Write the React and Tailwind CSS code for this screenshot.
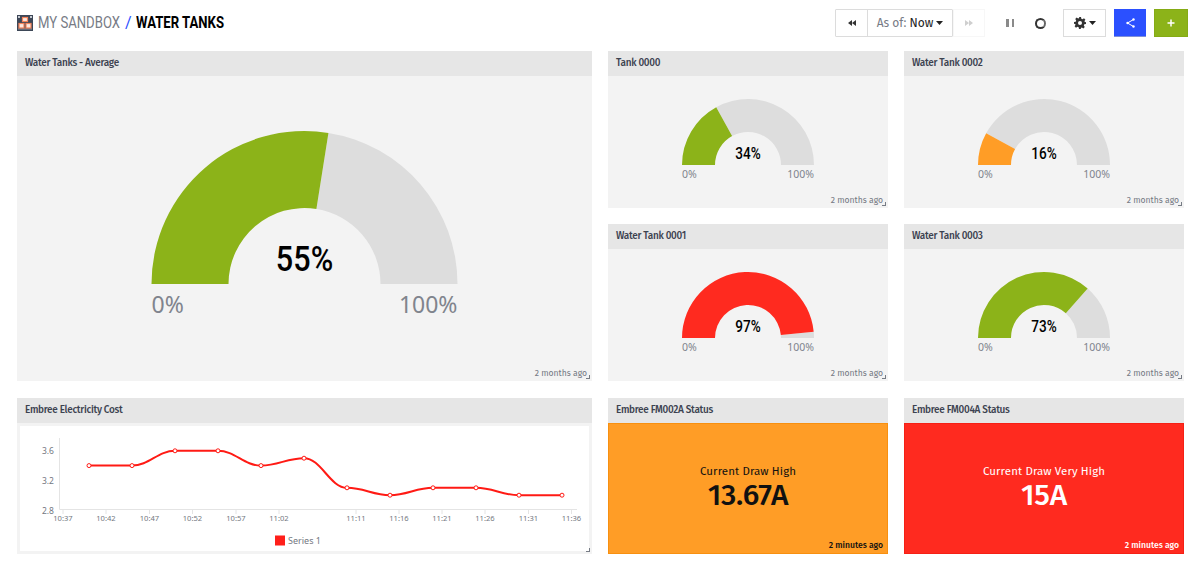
import React from "react";

const FONT = "font-['Fira_Sans','Noto_Sans','Roboto',sans-serif]";
const GREEN = "#8cb319";
const RED = "#ff2a1f";
const ORANGE = "#ff9d26";

function arc(cx, cy, R, r, a0, a1) {
  const p = (rad, a) => [cx - rad * Math.cos(a), cy - rad * Math.sin(a)];
  const [x0, y0] = p(R, a0);
  const [x1, y1] = p(R, a1);
  const [x2, y2] = p(r, a1);
  const [x3, y3] = p(r, a0);
  return `M${x0} ${y0}A${R} ${R} 0 0 1 ${x1} ${y1}L${x2} ${y2}A${r} ${r} 0 0 0 ${x3} ${y3}Z`;
}

function Gauge({ w, h, cx, cy, R, r, value, color, big }) {
  const a = (value / 100) * Math.PI;
  const vy = big ? cy - 13 : cy - 6;
  return (
    <svg width={w} height={h} viewBox={`0 0 ${w} ${h}`} className="block">
      <path d={arc(cx, cy, R, r, a, Math.PI)} fill="#dddddd" />
      <path d={arc(cx, cy, R, r, 0, a)} fill={color} />
      <text transform={`translate(${cx} ${vy}) scale(0.85 1)`} textAnchor="middle" fontFamily="Roboto, sans-serif" fontWeight="500" fontSize={big ? 36 : 16} fill="#000">{value}%</text>
      <text x={cx - R} y={big ? cy + 29 : cy + 13} fontFamily="'Noto Sans', sans-serif" fontSize={big ? 23 : 10.5} fill="#80848d">0%</text>
      <text x={cx + R} y={big ? cy + 29 : cy + 13} textAnchor="end" fontFamily="'Noto Sans', sans-serif" fontSize={big ? 23 : 10.5} fill="#80848d">100%</text>
    </svg>
  );
}

function Handle({ dark }) {
  return <span className={`absolute right-[2px] bottom-[2px] w-[4px] h-[4px] border-r border-b ${dark ? "border-[#a86a1c]" : "border-[#777c85]"}`} />;
}

function PanelHead({ title }) {
  return <div className="h-[25px] shrink-0 bg-[#e6e6e6] pl-[8px] flex items-center text-[10px] font-medium text-[#3c4250] tracking-[-0.3px]">{title}</div>;
}

function Panel({ title, time, body = "bg-[#f3f3f3]", children, dark }) {
  return (
    <div className="flex flex-col min-w-0 h-full">
      <PanelHead title={title} />
      <div className={`relative flex-1 min-h-0 ${body}`}>
        {children}
        {time && <span className="absolute right-[5px] bottom-[2px] text-[8.6px] leading-[12px] text-[#747983]">{time}</span>}
        <Handle dark={dark} />
      </div>
    </div>
  );
}

function SmallGauge({ title, value, color }) {
  return (
    <Panel title={title} time="2 months ago">
      <div className="pt-[22px] flex justify-center">
        <Gauge w={280} h={110} cx={140} cy={67} R={66} r={33} value={value} color={color} />
      </div>
    </Panel>
  );
}

const pts = [[89,3.4],[132,3.4],[175,3.6],[218,3.6],[261,3.4],[304,3.5],[347,3.1],[390,3.0],[433,3.1],[476,3.1],[519,3.0],[562,3.0]];
const yOf = (v) => 510 - (v - 2.8) * 74;
const ticks = [[63,"10:37"],[106,"10:42"],[149.5,"10:47"],[192.5,"10:52"],[236,"10:57"],[279,"11:02"],[356,"11:11"],[399,"11:16"],[442,"11:21"],[485,"11:26"],[528.5,"11:31"],[571.5,"11:36"]];

function linePath() {
  const P = pts.map(([x, v]) => [x, yOf(v)]);
  let d = `M${P[0][0]} ${P[0][1]}`;
  for (let i = 1; i < P.length; i++) {
    const [x0, y0] = P[i - 1];
    const [x1, y1] = P[i];
    const dx = (x1 - x0) * 0.4;
    d += `C${x0 + dx} ${y0} ${x1 - dx} ${y1} ${x1} ${y1}`;
  }
  return d;
}

function Chart() {
  const ox = 20, oy = 426;
  return (
    <div className="h-full p-[3px]">
      <div className="bg-white h-full">
        <svg width="568" height="125" viewBox={`${ox} ${oy} 568 125`} className="block" fontFamily="'Noto Sans', sans-serif">
          <path d="M59.5 438V509.5H577" stroke="#e4e4e4" strokeWidth="1" fill="none" />
          {ticks.map(([x, t]) => (
            <g key={t}>
              <line x1={x} x2={x} y1={509.5} y2={514} stroke="#e4e4e4" />
              <text x={x} y={521} textAnchor="middle" fontSize="7.6" fill="#74787f">{t}</text>
            </g>
          ))}
          {[["3.6", 454], ["3.2", 484], ["2.8", 513.5]].map(([t, y]) => (
            <text key={t} x={54} y={y} textAnchor="end" fontSize="8.5" fill="#74787f">{t}</text>
          ))}
          <path d={linePath()} stroke="#ff1a14" strokeWidth="2" fill="none" />
          {pts.map(([x, v]) => (
            <circle key={x} cx={x} cy={yOf(v)} r="2" fill="#fff" stroke="#ff1a14" strokeWidth="1" />
          ))}
          <rect x="275" y="535.5" width="10" height="10" fill="#ff1f1a" />
          <text x="288" y="544" fontSize="9" fill="#74787f">Series 1</text>
        </svg>
      </div>
    </div>
  );
}

function Status({ title, label, value, bg, border, textClass }) {
  return (
    <div className="flex flex-col h-full">
      <PanelHead title={title} />
      <div className={`relative flex-1 flex flex-col items-center justify-center border ${bg} ${border} ${textClass}`}>
        <div className="text-[11.5px] leading-[16px] tracking-[0.1px] mt-[-3px]">{label}</div>
        <div className="text-[30px] leading-[32px] font-medium tracking-[-0.2px]">{value}</div>
        <span className="absolute right-[4px] bottom-[2px] text-[8.6px] leading-[12px] font-medium">2 minutes ago</span>
      </div>
    </div>
  );
}

function Logo() {
  return (
    <svg width="16" height="16" viewBox="0 0 16 16" className="shrink-0">
      <rect width="16" height="16" fill="#3d4757" />
      <rect x="1" y="1" width="2" height="2" fill="#c3c8cf" />
      <rect x="13" y="1" width="2" height="2" fill="#c3c8cf" />
      <rect x="1" y="13.500" width="14" height="1" fill="#8d94a0" />
      <rect x="5.500" y="2.500" width="5" height="4" fill="#fbe9e0" stroke="#f5845a" strokeWidth="1.200" />
      <rect x="2" y="8.500" width="5" height="4.500" fill="#fbe9e0" stroke="#f5845a" strokeWidth="1.200" />
      <rect x="9" y="8.500" width="5" height="4.500" fill="#fbe9e0" stroke="#f5845a" strokeWidth="1.200" />
    </svg>
  );
}

export default function App() {
  return (
    <div className={`w-[1200px] h-[570px] bg-white overflow-hidden ${FONT}`}>
      <header className="h-[51px] pl-[17px] pr-[12px] flex items-start justify-between">
        <div className="flex items-center h-[46px] font-['Roboto',sans-serif] text-[16px]">
          <Logo />
          <span className="ml-[5px] w-[82px] whitespace-nowrap inline-block origin-left scale-x-[0.82] text-[#777b85]">MY SANDBOX</span>
          <span className="ml-[5px] text-[#2b50ff]">/</span>
          <span className="ml-[4px] w-[88px] whitespace-nowrap inline-block origin-left scale-x-[0.82] text-black font-bold">WATER TANKS</span>
        </div>
        <div className="flex items-center mt-[9px] h-[28px]">
          <div className="flex h-[28px] border border-[#dcdcdc] rounded-[1px]">
            <button className="w-[32px] flex items-center justify-center border-r border-[#dcdcdc]">
              <svg width="8" height="6" viewBox="0 0 8 6" fill="#333"><path d="M4 0V6L0 3ZM8 0V6L4 3Z" /></svg>
            </button>
            <div className="w-[84px] flex items-center justify-center text-[12px] text-[#777b85]">
              As of:&nbsp;<span className="text-[#222]">Now</span>
              <svg width="7" height="4" viewBox="0 0 7 4" className="ml-[3px]" fill="#222"><path d="M0 0H7L3.500 4Z" /></svg>
            </div>
          </div>
          <div className="w-[32px] h-[28px] flex items-center justify-center border border-[#f7f7f7]">
            <svg width="8" height="6" viewBox="0 0 8 6" fill="#cfcfcf"><path d="M0 0V6L4 3ZM4 0V6L8 3Z" /></svg>
          </div>
          <div className="ml-[21px] flex gap-[3px]">
            <span className="w-[2.500px] h-[8px] bg-[#8a8a8a]" />
            <span className="w-[2.500px] h-[8px] bg-[#8a8a8a]" />
          </div>
          <span className="ml-[21px] w-[11px] h-[11px] rounded-full border-2 border-[#333] border-r-[#666]" />
          <div className="ml-[17px] w-[43px] h-[28px] flex items-center justify-center gap-[3px] border border-[#dcdcdc]">
            <svg width="12" height="12" viewBox="0 0 24 24" fill="#333">
              <path fillRule="evenodd" d="M10 0h4l.7 3.400 2.400 1 2.900-1.900 2.800 2.800-1.900 2.900 1 2.400L24 10v4l-3.400.7-1 2.400 1.900 2.900-2.800 2.800-2.900-1.900-2.400 1L14 24h-4l-.7-3.400-2.400-1L4 21.400 1.200 18.600l1.900-2.900-1-2.400L0 14v-4l3.400-.7 1-2.400L2.500 4 5.300 1.200l2.900 1.900 2.400-1zM12 8a4 4 0 1 0 0 8 4 4 0 0 0 0-8z" />
            </svg>
            <svg width="7" height="4" viewBox="0 0 7 4" fill="#222"><path d="M0 0H7L3.500 4Z" /></svg>
          </div>
          <button className="ml-[8px] w-[32px] h-[28px] bg-[#2b50ff] border-b border-[#7f8fd8] flex items-center justify-center">
            <svg width="9" height="10" viewBox="0 0 9 10" fill="none" stroke="#fff" strokeWidth="1">
              <path d="M7.500 1.500L1.500 5L7.500 8.500" />
              <circle cx="7.500" cy="1.500" r="1.200" fill="#fff" stroke="none" />
              <circle cx="1.500" cy="5" r="1.200" fill="#fff" stroke="none" />
              <circle cx="7.500" cy="8.500" r="1.200" fill="#fff" stroke="none" />
            </svg>
          </button>
          <button className="ml-[8px] w-[34px] h-[28px] bg-[#8cb319] border border-[#85ab15] flex items-center justify-center">
            <svg width="8" height="8" viewBox="0 0 8 8" stroke="#fff" strokeWidth="1.500"><path d="M4 0.500V7.500M0.500 4H7.500" /></svg>
          </button>
        </div>
      </header>

      <main className="pl-[17px] w-[1184px]">
        <div className="grid grid-cols-[575px_280px_280px] grid-rows-[157px_157px] gap-x-[16px] gap-y-[16px]">
          <div className="row-span-2">
            <Panel title="Water Tanks - Average" time="2 months ago">
              <div className="pt-[54px] flex justify-center">
                <Gauge w={575} h={200} cx={287.5} cy={154} R={153} r={76} value={55} color={GREEN} big />
              </div>
            </Panel>
          </div>
          <SmallGauge title="Tank 0000" value={34} color={GREEN} />
          <SmallGauge title="Water Tank 0002" value={16} color={ORANGE} />
          <SmallGauge title="Water Tank 0001" value={97} color={RED} />
          <SmallGauge title="Water Tank 0003" value={73} color={GREEN} />
        </div>
        <div className="mt-[17px] h-[156px] grid grid-cols-[575px_280px_280px] gap-x-[16px]">
          <Panel title="Embree Electricity Cost"><Chart /></Panel>
          <Status title="Embree FM002A Status" label="Current Draw High" value="13.67A" bg="bg-[#ff9d26]" border="border-[#f89010]" textClass="text-[#111]" />
          <Status title="Embree FM004A Status" label="Current Draw Very High" value="15A" bg="bg-[#ff2a1f]" border="border-[#f52015]" textClass="text-white" />
        </div>
      </main>
    </div>
  );
}
